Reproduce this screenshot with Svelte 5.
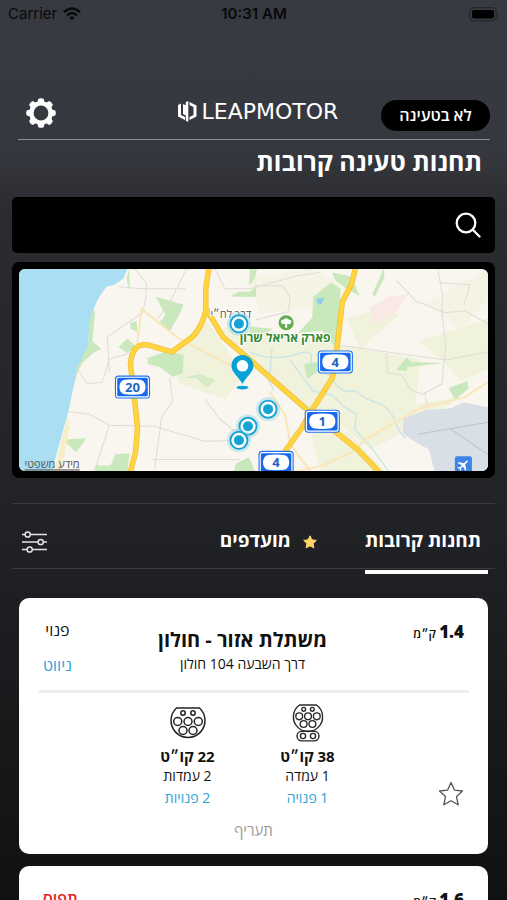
<script>
  const stations = [
    {
      distance: '1.4', status: 'פנוי', free: true,
      name: 'משתלת אזור - חולון', address: 'דרך השבעה 104 חולון',
      plugs: [
        { kind: 'ccs', power: '38 קו״ט', count: '1 עמדה', available: '1 פנויה' },
        { kind: 'type2', power: '22 קו״ט', count: '2 עמדות', available: '2 פנויות' }
      ]
    },
    { distance: '1.6', status: 'תפוס', free: false, name: '', address: '', plugs: [] }
  ];
  const dots = [[219, 55], [248, 140], [228, 157], [219, 171]];
  const shields = [[113, 118, '20'], [315, 93, '4'], [302, 152, '1'], [256, 193, '4']];
  let query = $state('');
</script>

<div class="screen" dir="rtl">
  <div class="status-bar" dir="ltr">
    <span class="carrier">Carrier
      <svg width="18" height="14" viewBox="0 0 18 14" fill="none" stroke="#08090a" stroke-width="2.500">
        <path d="M1 5Q9-2 17 5M4 8.300Q9 4 14 8.300" />
        <path d="M6.200 10.600Q9 8.400 11.800 10.600L9 13.500Z" fill="#08090a" stroke="none" />
      </svg>
    </span>
    <strong>10:31 AM</strong>
    <span class="battery">
      <svg width="31" height="15" viewBox="0 0 31 15">
        <rect x=".7" y=".7" width="26.600" height="13.200" rx="4" fill="none" stroke="#24262a" stroke-width="1.200" />
        <rect x="3" y="3" width="22" height="8.600" rx="2" fill="#000" />
        <path d="M29 5.500q1.500 2 0 4z" fill="#24262a" />
      </svg>
    </span>
  </div>

  <header>
    <span class="pill">לא בטעינה</span>
    <div class="brand" dir="ltr">
      <svg width="19" height="21" viewBox="0 0 19 21" fill="#fff">
        <path d="M0 4L3 2.500V14L7 16V19L0 15.500ZM7.800 1L10.300 0V21L7.800 19.800V14.500L5 13V3L7.800 4.200Z" />
        <path d="M11.500 1L18.500 4.500V15.500L11.500 19V16L15.500 14V6L11.500 4Z" />
      </svg>
      <span>LEAPMOTOR</span>
    </div>
    <button class="gear" aria-label="הגדרות">
      <svg width="30" height="30" viewBox="-15 -15 30 30">
        <g fill="#fff">
          {#each [0, 45, 90, 135, 180, 225, 270, 315] as a}
            <path d="M-4-9.500L-2.600-14.200Q0-15.400 2.600-14.200L4-9.500Z" transform="rotate({a})" />
          {/each}
        </g>
        <circle r="9.600" fill="none" stroke="#fff" stroke-width="4.400" />
      </svg>
    </button>
  </header>

  <h1>תחנות טעינה קרובות</h1>

  <label class="search">
    <svg width="26" height="26" viewBox="0 0 26 26" fill="none" stroke="#fff" stroke-width="2.300" stroke-linecap="round">
      <circle cx="11" cy="11" r="9.300" /><path d="M17.800 17.800L24.500 24.500" />
    </svg>
    <input type="search" aria-label="חיפוש" bind:value={query} />
  </label>

  <div class="map">
    <svg viewBox="0 0 467 202" preserveAspectRatio="xMidYMid slice">
      <rect width="467" height="202" fill="#f9f6ef" />
      <g fill="#f0f2dc">
        <path d="M187 48L230 90 285 140 300 202H365L330 165 300 150 312 110 317 76 250 62 218 54 203 60ZM185 50L152 84 160 115 205 130 225 105Z" />
        <path d="M317 76L400 90 395 135 440 128 390 160 350 180 300 140ZM340 80L380 45 350 42 326 50ZM398 72L430 62 467 50V100L440 112 425 95Z" />
        <path d="M405 35L467 0V30L440 60ZM230 10L290 0 330 20 310 35 240 45Z" opacity=".6" />
      </g>
      <path d="M349 39L368 28 388 25 376 42 355 57Z" fill="#f9e8e3" />
      <g fill="#c9e8bb">
        <path d="M293 28L311 14 320 20 318 65 314 78 302 62 278 64 292 49ZM136 28L164 36 160 45 150 63 139 55 146 46ZM111 54L117 52 118 63 111 60ZM99 78L108 70 116 77 108 84ZM128 89L148 82 164 86 163 104 153 108 140 98 128 95Z" />
        <path d="M160 109L181 105 195 111 188 119 176 109Z" opacity=".7" />
        <path d="M69 40L76 43 73 72 82 80 75 83 63 94 58 104 54 120 51 119 61 88 69 75ZM48 170L67 169 57 183 46 173ZM76 196L91 196 96 185 110 184 108 202H76ZM110 0V22L107 10ZM211 27L219 23H230L236 18V28H213ZM216 194L229 188 235 202H214Z" />
        <path d="M230 0H237L235 10 229 17ZM312 4L331 8 339 27 328 21 315 12ZM363 0L364 9 354 28 352 25ZM376 101L386 88 390 93 423 94 387 98 386 102ZM428 119L446 112 448 119 434 131ZM284 95L297 93 299 101 287 110ZM230 58L253 60 245 64H230Z" />
      </g>
      <path d="M0 0H108L104 10 95 16 87 18 80 28 76 36 70 53 69 76 63 88 58 99 52 129 49 143 35 193 33 202H0Z" fill="#a9def3" />
      <path d="M49 145L35 202H42L50 160Z" fill="#f6edc9" />
      <path d="M296 30L304 29 301 35 298 36Z" fill="#8dcdec" />
      <path d="M383 149L405 141 430 139 442 133 467 138V202H414L408 180 395 173 382 164Z" fill="#d9dfe7" />
      <g fill="none" stroke="#bfc3ce"><path d="M397 165L467 153M430 160L467 185" /></g>
      <g fill="none" stroke="#dedcd7" stroke-width="1">
        <path d="M100 18L122 20 166 20M115 0L127 15 126 31 123 44 88 68 90 104M57 98L68 115 83 113 90 90 115 83M48 142L70 145 90 156 135 157 185 172 230 171M90 156L75 202M150 108L153 132 142 148 135 200M167 0L150 34 138 50M195 0L205 20H230M185 130L200 150 215 162M133 190H220" />
        <path d="M376 12L395 32 424 44 444 42 467 55M417 0L422 28 421 44 425 75 421 115 402 125 390 121 381 106 367 104 366 84M317 76L424 91 467 83M235 17L262 17 270 28 268 43 236 51M418 14L449 16 443 37M404 123L407 140M230 20L278 7 300 4" />
      </g>
      <g fill="none" stroke="#c8e4e4" stroke-width="1.300">
        <path d="M230 83Q253 94 280 84 295 80 290 94 299 101 312 108 318 125 335 122 347 132 356 133 366 136 373 148 377 162 385 169M270 91L283 109 293 122 312 126 323 137 336 145 334 160 349 176 361 192 368 202M252 80L249 112 254 121" />
      </g>
      <g fill="none" stroke="#fae6b8" stroke-width="2">
        <path d="M117 79L122 40 158 69 210 96M250 123L265 146 270 174 279 187 290 201M467 113L444 128 400 139 380 150 345 170 333 182 300 197 275 202" />
      </g>
      <g fill="none" stroke-linejoin="round">
        {#each [['#edbd44', 5.500], ['#ffd43d', 4.200]] as [c, w]}
          <g stroke={c} stroke-width={w}>
            <path d="M189 0L186 20V41Q183 57 173 68L152 83 128 76Q112 74 111 96L115 129 118 159 116 183 111 202" />
            <path d="M187 41L203 68 230 91 285 139 317 164 337 180 360 204" />
            <path d="M335 0L331 16 322 33 317 76 312 109 293 139 282 158 267 179 252 202" />
          </g>
        {/each}
      </g>
      <text class="road" x="211" y="49">דרך לח״י</text>
      <text class="park" x="265" y="73">פארק אריאל שרון</text>
      <circle cx="266" cy="54" r="7.500" fill="#63ad52" />
      <path d="M261 54q-1-3 2-3 3-3 6 0 3 0 2 3-1 2-4 1v4h-2v-4q-3 1-4-1Z" fill="#fff" />
      {#each dots as [x, y]}
        <g transform="translate({x} {y})">
          <circle r="12" fill="#8ed3e8" opacity=".4" />
          <circle r="8.500" fill="#fff" stroke="#16a3d3" stroke-width="1.900" />
          <circle r="5" fill="#16a3d3" />
        </g>
      {/each}
      <path d="M222.500 86C229 86 233.500 91 233.500 97 233.500 103 226 108 222.500 115 219 108 211.500 103 211.500 97 211.500 91 216 86 222.500 86Z" fill="#08a1d6" />
      <circle cx="222.500" cy="96.800" r="5.800" fill="#fff" />
      <ellipse cx="222.500" cy="118.500" rx="6" ry="1.800" fill="#08a1d6" />
      {#each shields as [x, y, n]}
        <g transform="translate({x} {y})">
          <rect x="-17.500" y="-11.500" width="35" height="23" rx="3.500" fill="#2372ea" />
          <rect x="-15.800" y="-9.800" width="31.600" height="19.600" rx="2" fill="#1769ee" stroke="#fff" stroke-width="1.200" />
          <path d="M-9-7Q0-8.500 9-7 13-5 13 0T9 7Q0 8.500-9 7-13 5-13 0T-9-7Z" fill="#fff" />
          <text class="shield" y="5">{n}</text>
        </g>
      {/each}
      <rect x="434" y="187" width="17" height="17" rx="2" fill="#3d83e9" />
      <path d="M-.9-6Q0-7.200.9-6V-1.800L6 1.500V3L.9 1.500V4.500L2.600 6V7L0 6.200-2.600 7V6L-.9 4.500V1.500L-6 3V1.500L-.9-1.800Z" fill="#fff" transform="translate(442.500 195.500) rotate(45) scale(.9)" />
      <text class="legal" x="33" y="199">מידע משפטי</text>
    </svg>
  </div>

  <nav>
    <button class="tab active">תחנות קרובות</button>
    <button class="tab">
      <svg width="14" height="14" viewBox="0 0 14 14"><path d="M7 .8L8.900 4.800 13.300 5.400 10.100 8.500 10.900 12.900 7 10.800 3.100 12.900 3.900 8.500.7 5.400 5.100 4.800Z" fill="#ffd267" stroke="#ffd267" stroke-linejoin="round" /></svg>
      מועדפים
    </button>
    <button class="filter" aria-label="סינון">
      <svg width="26" height="22" viewBox="0 0 26 22" fill="none" stroke="#e4e4e5" stroke-width="1.500">
        <path d="M0 3.500H3M8.500 3.500H25M0 11H16M21.500 11H25M0 18.500H5M10.500 18.500H25" />
        <circle cx="5.700" cy="3.500" r="2.600" /><circle cx="18.700" cy="11" r="2.600" /><circle cx="7.700" cy="18.500" r="2.600" />
      </svg>
    </button>
  </nav>

  <main>
    {#each stations as s}
      <article>
        <div class="top">
          <div class="distance"><b>{s.distance}</b> ק״מ</div>
          {#if s.name}<div class="place"><h2>{s.name}</h2><p>{s.address}</p></div>{/if}
          <div class="state">
            <span class:busy={!s.free}>{s.status}</span>
            {#if s.free}<a href="#navigate">ניווט</a>{/if}
          </div>
        </div>
        {#if s.plugs.length}
          <div class="body">
            <button class="star" aria-label="הוספה למועדפים">
              <svg width="26" height="26" viewBox="0 0 26 26" fill="none" stroke="#555" stroke-width="1.300" stroke-linejoin="round">
                <path d="M13 1.500L16.400 9.100 24.500 10 18.500 15.600 20.200 23.800 13 19.700 5.800 23.800 7.500 15.600 1.500 10 9.600 9.100Z" />
              </svg>
            </button>
            <div class="plugs">
              {#each s.plugs as p}
                <div class="plug">
                  {#if p.kind === 'ccs'}
                    <svg width="32" height="38" viewBox="0 0 32 38" fill="none" stroke="#2b2b2b" stroke-width="1.400">
                      <path d="M7.500 1H24.500A14.600 14.600 0 1 1 7.500 1Z" />
                      <circle cx="11.700" cy="5.300" r="1.900" /><circle cx="20.300" cy="5.300" r="1.900" />
                      <circle cx="7.200" cy="12.300" r="3.400" /><circle cx="16" cy="12.300" r="3.400" /><circle cx="24.800" cy="12.300" r="3.400" />
                      <circle cx="11.600" cy="20" r="3.400" /><circle cx="20.400" cy="20" r="3.400" />
                      <rect x="5" y="27.300" width="22" height="9.600" rx="4.800" />
                      <circle cx="11" cy="32" r="2.600" /><circle cx="21" cy="32" r="2.600" />
                    </svg>
                  {:else}
                    <svg width="38" height="38" viewBox="0 0 38 38" fill="none" stroke="#222" stroke-width="1.500">
                      <path d="M7.500 4H30.500A17 17 0 1 1 7.500 4Z" />
                      <circle cx="14" cy="9" r="2.200" /><circle cx="24" cy="9" r="2.200" />
                      <circle cx="8.700" cy="17.500" r="4" /><circle cx="19" cy="17.500" r="4" /><circle cx="29.300" cy="17.500" r="4" />
                      <circle cx="14" cy="26.500" r="4" /><circle cx="24" cy="26.500" r="4" />
                    </svg>
                  {/if}
                  <b>{p.power}</b>
                  <span>{p.count}</span>
                  <em>{p.available}</em>
                </div>
              {/each}
            </div>
          </div>
          <button class="tariff">תעריף</button>
        {/if}
      </article>
    {/each}
  </main>
</div>

<style>
  :global(body) { margin: 0; background: #111214; }
  * { box-sizing: border-box; }
  button { border: 0; padding: 0; background: none; color: inherit; font: inherit; cursor: pointer; }
  svg { display: block; flex: none; }
  h1, h2, p { margin: 0; }

  .screen {
    height: 100vh;
    overflow: hidden;
    padding: 0 12px;
    color: #fff;
    font-family: "Open Sans", "Noto Sans", sans-serif;
    background: linear-gradient(#373a41 0, #36383f 150px, #2b2c30 210px, #222326 500px, #191a1c 700px, #101113 900px);
  }
  .status-bar {
    display: grid;
    grid-template-columns: 1fr auto 1fr;
    align-items: center;
    height: 28px;
    margin: 0 -5px 0 -4px;
    color: #08090a;
    font: 15px/28px Inter, sans-serif;
  }
  .status-bar strong { font-weight: 600; }
  .carrier { display: flex; align-items: center; gap: 6px; }
  .battery { justify-self: end; }

  header {
    display: grid;
    grid-template-columns: 1fr auto 1fr;
    align-items: center;
    height: 56px;
    margin: 56px 5px 0 6px;
    padding: 2px 0 0 8px;
    border-bottom: 1px solid #8c8e92;
  }
  .pill {
    width: 109px;
    margin-top: 6px;
    border-radius: 16px;
    background: #000;
    font-size: 16px;
    font-weight: 600;
    line-height: 31px;
    text-align: center;
  }
  .brand { display: flex; align-items: center; gap: 5px; margin-bottom: 2px; font: 22px/24px "DejaVu Sans", sans-serif; }
  .gear { justify-self: end; }
  h1 { padding: 0 13px; font-size: 25px; font-weight: 700; line-height: 42px; }

  .search {
    display: flex;
    align-items: center;
    height: 56px;
    margin-top: 15px;
    padding: 0 14px;
    border-radius: 5px;
    background: #000;
  }
  .search input { flex: 1; min-width: 0; border: 0; outline: 0; background: none; color: #fff; font: 18px "Open Sans", sans-serif; }

  .map { margin-top: 9px; padding: 7px; border-radius: 7px; background: #000; }
  .map svg { width: 100%; height: 202px; border-radius: 6px; }
  .map text { direction: rtl; text-anchor: middle; font-family: "Open Sans", sans-serif; paint-order: stroke; stroke: #fff; stroke-width: 2px; stroke-linejoin: round; }
  .map .road { font-size: 11px; fill: #555; }
  .map .park { font-size: 12px; font-weight: 700; fill: #33892d; }
  .map .legal { font-size: 11px; fill: #555; text-decoration: underline; stroke: none; }
  .map .shield { font-size: 13px; font-weight: 700; fill: #2463c5; stroke: none; }

  nav {
    display: flex;
    height: 66px;
    margin-top: 25px;
    padding: 0 7px;
    border: solid #3b3c3f;
    border-width: 1px 0;
  }
  .tab { display: flex; align-items: center; gap: 12px; height: 70px; margin-left: 48px; padding: 5px 7px 0 0; font-size: 19px; font-weight: 700; border-bottom: 4px solid transparent; }
  .tab.active { margin-left: 41px; border-color: #fff; }
  .tab svg { margin-top: 5px; }
  .filter { margin-right: auto; padding: 11px 3px 0; }

  main { display: flex; flex-direction: column; gap: 12px; margin-top: 29px; padding: 0 7px; }
  article { padding: 22px 19px 0; border-radius: 10px; background: #fff; color: #111; }
  .top { display: flex; justify-content: space-between; height: 70px; padding: 0 5px; }
  .distance { font-size: 12px; font-weight: 600; line-height: 24px; white-space: nowrap; }
  .distance b { font-size: 17px; }
  .place { padding-top: 6px; text-align: center; }
  h2 { font-size: 20px; line-height: 28px; }
  p { font-size: 14px; line-height: 20px; }
  .state { display: flex; flex-direction: column; align-items: center; gap: 14px; font-size: 16px; line-height: 21px; }
  .state .busy { color: #e62525; font-weight: 600; }
  .state a { color: #2aa3df; text-decoration: none; }
  .body { display: flex; align-items: flex-end; height: 118px; padding: 0 5px; border-top: 3px solid #eee; }
  .star { padding-bottom: 1px; }
  .plugs { display: flex; flex: 1; justify-content: center; padding-left: 14px; }
  .plug { display: flex; flex-direction: column; align-items: center; width: 120px; font-size: 14px; line-height: 19px; }
  .plug b { margin-top: 4px; font-size: 15px; line-height: 20px; }
  .plug em { margin-top: 3px; color: #2aa3d6; font-style: normal; line-height: 20px; }
  .tariff { display: block; margin: 10px auto 0; padding-bottom: 12px; color: #999; font-size: 15px; line-height: 24px; }
</style>
